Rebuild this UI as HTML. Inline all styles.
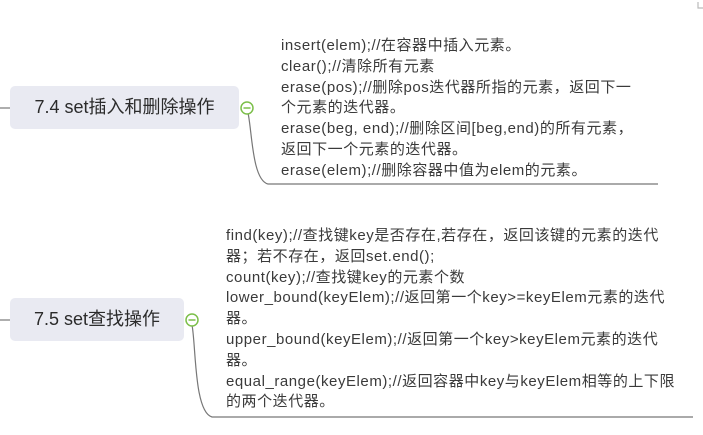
<!DOCTYPE html>
<html><head><meta charset="utf-8"><style>
body{margin:0;width:703px;height:435px;background:#fff;position:relative;overflow:hidden;font-family:"Liberation Sans","Noto Sans CJK SC",sans-serif;color:#333}
.node{position:absolute;background:#e9eaf2;border-radius:5px;font-size:18px;line-height:43px;text-align:center;color:#2b2b2b}
.txt{position:absolute;font-size:15px;letter-spacing:0.55px;line-height:20.8px;color:#3a3a3a;white-space:nowrap}
svg{position:absolute;left:0;top:0}
</style></head><body>
<svg width="703" height="435">
<g fill="none" stroke="#777" stroke-width="1.2">
<path d="M0 108H10"/><path d="M0 320H10"/>
<path d="M248 113C252 130 252 180 268 184H658"/>
<path d="M192 325C196 345 194 412 212 417H693"/>
<path d="M698 2V8H703" stroke="#bbb"/>
</g>
<g fill="#fff" stroke="#7cbf4a" stroke-width="1.5">
<circle cx="247" cy="108" r="6"/><circle cx="192" cy="320" r="6"/>
</g>
<g stroke="#7cbf4a" stroke-width="1.5"><path d="M243.5 108H250.5"/><path d="M188.5 320H195.5"/></g>
</svg>
<div class="node" style="left:10px;top:86px;width:229px;height:43px">7.4 set插入和删除操作</div>
<div class="node" style="left:10px;top:298px;width:174px;height:43px">7.5 set查找操作</div>
<div class="txt" style="left:281px;top:36px">insert(elem);//在容器中插入元素。<br>clear();//清除所有元素<br>erase(pos);//删除pos迭代器所指的元素，返回下一<br>个元素的迭代器。<br>erase(beg, end);//删除区间[beg,end)的所有元素，<br>返回下一个元素的迭代器。<br>erase(elem);//删除容器中值为elem的元素。</div>
<div class="txt" style="left:226px;top:226px">find(key);//查找键key是否存在,若存在，返回该键的元素的迭代<br>器；若不存在，返回set.end();<br>count(key);//查找键key的元素个数<br>lower_bound(keyElem);//返回第一个key&gt;=keyElem元素的迭代<br>器。<br>upper_bound(keyElem);//返回第一个key&gt;keyElem元素的迭代<br>器。<br>equal_range(keyElem);//返回容器中key与keyElem相等的上下限<br>的两个迭代器。</div>
</body></html>
